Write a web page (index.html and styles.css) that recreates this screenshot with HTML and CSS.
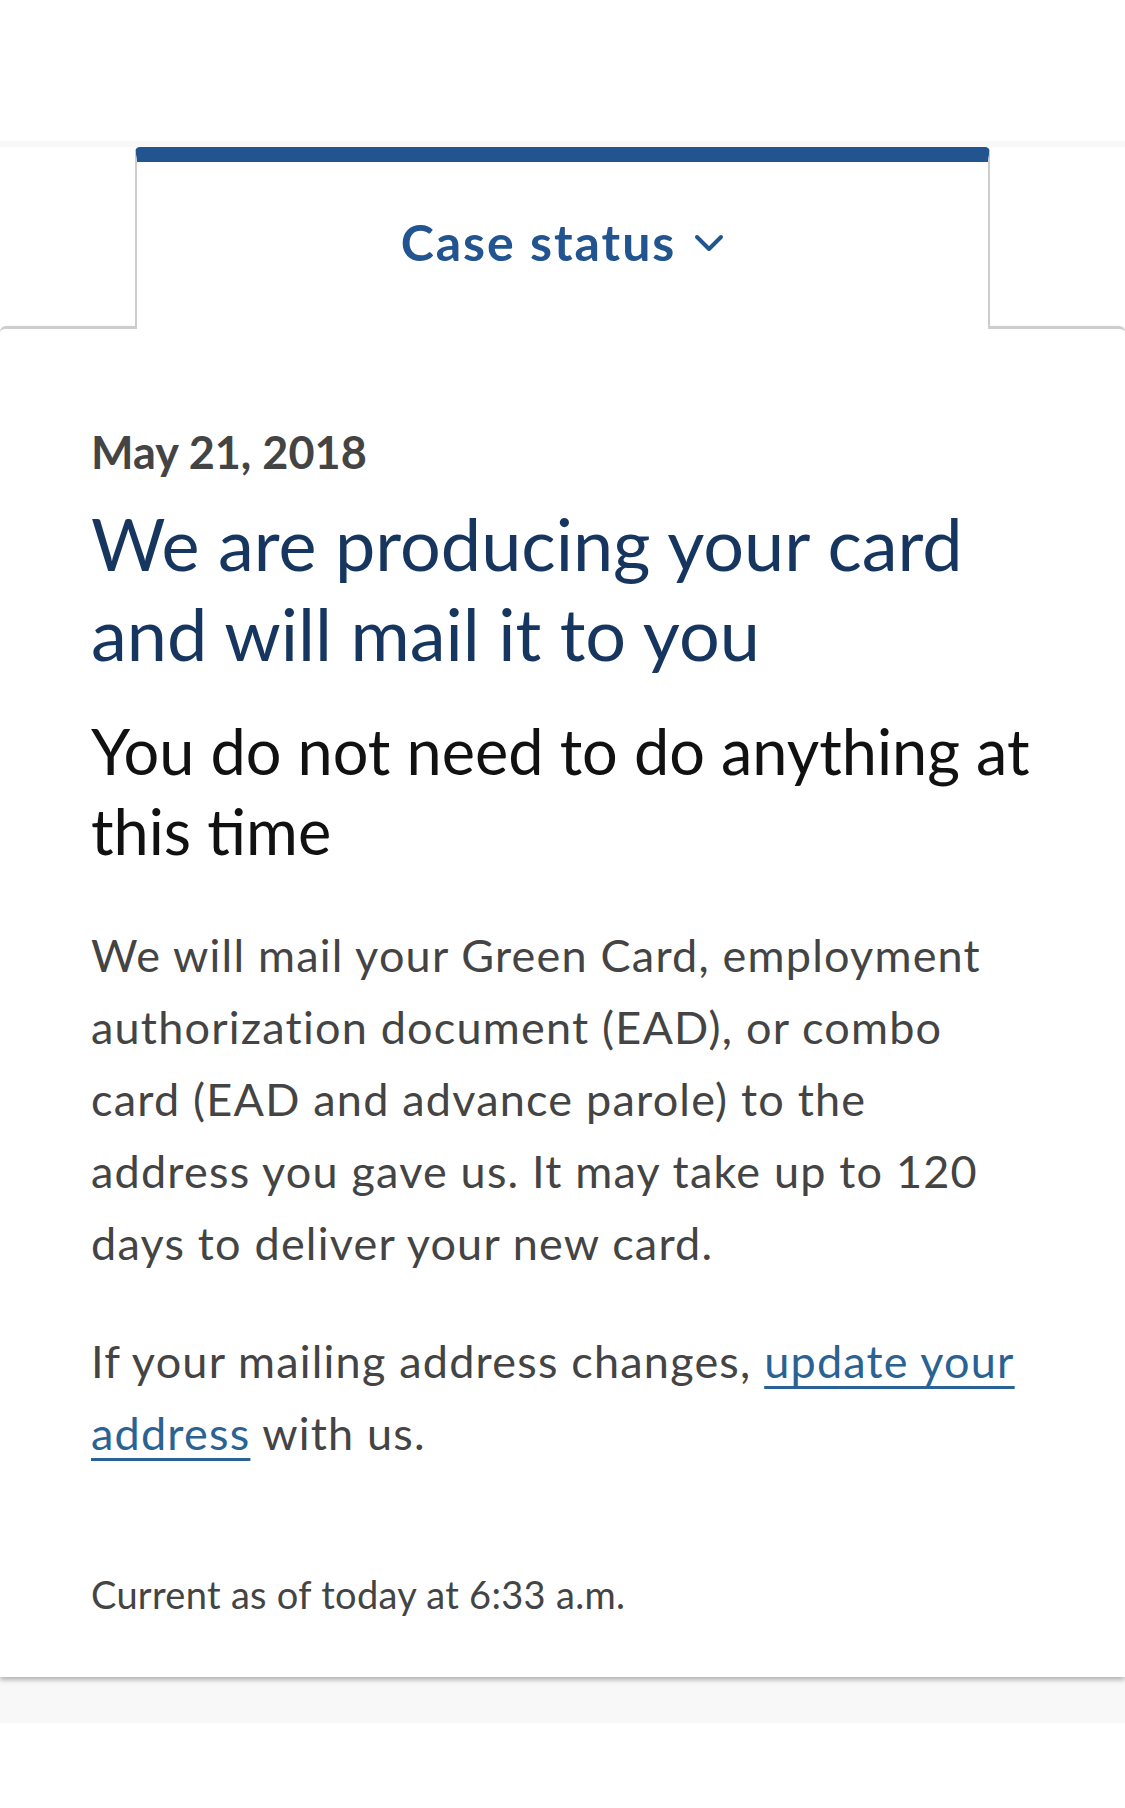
FILE: index.html
```html
<!DOCTYPE html>
<html lang="en">
<head>
    <meta charset="UTF-8">
    <meta name="viewport" content="width=device-width, initial-scale=1.0">
    <title>Case status</title>
    <link rel="stylesheet" href="styles.css">
</head>
<body>
    <div class="top-space"></div>

    <nav class="tabs">
        <div class="tab">
            <span class="tab-label">Case status</span>
            <svg class="chevron" width="30" height="18" viewBox="0 0 30 18">
                <polyline points="3,3 15,15 27,3" fill="none" stroke="#22548f" stroke-width="4" stroke-linecap="round" stroke-linejoin="round"/>
            </svg>
        </div>
    </nav>

    <main class="card">
        <p class="date">May 21, 2018</p>
        <h1 class="status-title">We are producing your card and will mail it to you</h1>
        <h2 class="status-sub">You do not need to do anything at this time</h2>
        <p class="body-text">We will mail your Green Card, employment authorization document (EAD), or combo card (EAD and advance parole) to the address you gave us. It may take up to 120 days to deliver your new card.</p>
        <p class="body-text second">If your mailing address changes, <a href="#">update your address</a> with us.</p>
        <p class="updated">Current as of today at 6:33 a.m.</p>
    </main>

    <div class="bottom-band"></div>
</body>
</html>
```

FILE: styles.css
```css
:root {
    --blue: #22548f;
    --navy: #17365f;
    --text: #444444;
    --border: #cdcdcd;
    --band: #f8f8f8;
}

* {
    box-sizing: border-box;
    margin: 0;
    padding: 0;
}

body {
    font-family: 'Lato', 'Open Sans', sans-serif;
    background-color: #ffffff;
    color: var(--text);
}

.top-space {
    height: 141px;
}

.tabs {
    border-top: 6px solid var(--band);
    display: flex;
    justify-content: center;
    position: relative;
    z-index: 1;
    margin-bottom: -3px;
}

.tab {
    width: 855px;
    height: 182px;
    border-top: 15px solid var(--blue);
    border-left: 2px solid var(--border);
    border-right: 2px solid var(--border);
    border-radius: 5px 5px 0 0;
    background-color: #ffffff;
    display: flex;
    align-items: center;
    justify-content: center;
    gap: 18px;
    padding-bottom: 8px;
}

.tab-label {
    font-size: 50px;
    font-weight: 700;
    letter-spacing: 2px;
    color: var(--blue);
}

.chevron {
    margin-top: 2px;
}

.card {
    border-top: 3px solid var(--border);
    border-radius: 6px 6px 0 0;
    padding: 96px 90px 60px 91px;
    box-shadow: 0 3px 5px rgba(0, 0, 0, 0.28);
    background-color: #ffffff;
    position: relative;
}

.date {
    font-size: 45px;
    line-height: 54px;
    font-weight: 700;
    color: var(--text);
}

.status-title {
    margin-top: 19px;
    font-size: 72px;
    line-height: 90px;
    font-weight: 400;
    color: var(--navy);
}

.status-sub {
    margin-top: 33px;
    font-size: 63px;
    line-height: 80px;
    font-weight: 400;
    color: #111111;
}

.body-text {
    margin-top: 48px;
    font-size: 45px;
    line-height: 72px;
    letter-spacing: 1.2px;
}

.body-text.second {
    margin-top: 46px;
}

.body-text a {
    color: #2a6293;
    text-decoration: underline;
    text-decoration-thickness: 3px;
    text-underline-offset: 8px;
}

.updated {
    margin-top: 102px;
    font-size: 38px;
    line-height: 46px;
    letter-spacing: 0.3px;
}

.bottom-band {
    height: 46px;
    background-color: var(--band);
}
```
